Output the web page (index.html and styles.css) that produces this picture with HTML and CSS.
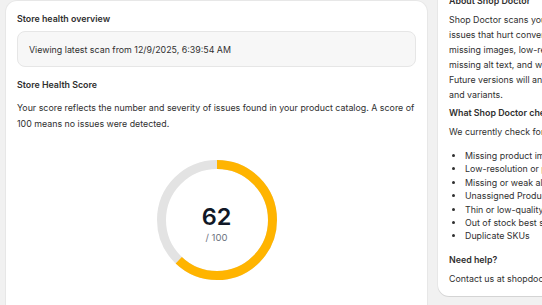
FILE: index.html
```html
<!DOCTYPE html>
<html lang="en">
<head>
    <meta charset="UTF-8">
    <meta name="viewport" content="width=device-width, initial-scale=1.0">
    <title>Shop Doctor</title>
    <link rel="stylesheet" href="styles.css">
</head>
<body>
    <div class="page">
        <!-- Main column -->
        <div class="card main-card">
            <h2 class="card-title">Store health overview</h2>
            <div class="scan-banner">Viewing latest scan from 12/9/2025, 6:39:54 AM</div>

            <h3 class="section-title">Store Health Score</h3>
            <p class="score-text">Your score reflects the number and severity of issues found in your product catalog. A score of 100 means no issues were detected.</p>

            <div class="score-ring">
                <svg width="120" height="120" viewBox="0 0 120 120">
                    <circle cx="60" cy="60" r="55.5" fill="none" stroke="#e3e3e3" stroke-width="9"/>
                    <!-- 62% of circumference 348.7 -->
                    <circle cx="60" cy="60" r="55.5" fill="none" stroke="#ffb400" stroke-width="9"
                            stroke-dasharray="216.2 348.7" transform="rotate(-90 60 60)"/>
                </svg>
                <div class="score-value">
                    <span class="score-number">62</span>
                    <span class="score-max">/ 100</span>
                </div>
            </div>
        </div>

        <!-- Sidebar -->
        <div class="card side-card">
            <h3 class="side-title">About Shop Doctor</h3>
            <p class="side-text about-text">Shop Doctor scans your store for common catalog<br>
                issues that hurt conversions and SEO, such as<br>
                missing images, low-resolution product photos,<br>
                missing alt text, and weak product descriptions.<br>
                Future versions will analyze more data like collections<br>
                and variants.</p>

            <h3 class="side-title">What Shop Doctor checks</h3>
            <p class="side-text">We currently check for:</p>
            <ul class="check-list">
                <li>Missing product images</li>
                <li>Low-resolution or poorly sized images</li>
                <li>Missing or weak alt text</li>
                <li>Unassigned Product Types</li>
                <li>Thin or low-quality descriptions</li>
                <li>Out of stock best sellers</li>
                <li>Duplicate SKUs</li>
            </ul>

            <h3 class="side-title">Need help?</h3>
            <p class="side-text">Contact us at shopdoctor.support@gmail.com</p>
        </div>
    </div>
</body>
</html>
```
FILE: styles.css
```css
body {
    font-family: Inter, "Noto Sans", sans-serif;
    background-color: #f1f1f1;
    color: #303030;
    margin: 0;
    overflow: hidden;
    font-size: 8.85px;
}

.page {
    display: grid;
    grid-template-columns: 421px 240px;
    gap: 11px;
    align-items: start;
    padding: 1px 0 0 6px;
}

.card {
    background-color: #ffffff;
    border-radius: 11px;
    padding: 11px;
    box-shadow: 0 1px 0 rgba(0, 0, 0, 0.08), 0 0 0 1px rgba(0, 0, 0, 0.04);
}

.main-card {
    min-height: 400px;
}

.card-title,
.section-title,
.side-title {
    font-size: 8.85px;
    font-weight: 600;
    line-height: 14px;
    margin: 0;
}

.scan-banner {
    margin-top: 5px;
    height: 34px;
    padding: 0 11px;
    display: flex;
    align-items: center;
    background-color: #f7f7f7;
    border: 1px solid #e6e6e6;
    border-radius: 8px;
}

.section-title {
    margin-top: 11px;
}

.score-text {
    margin: 8px 0 0;
    line-height: 16px;
}

.score-ring {
    position: relative;
    width: 120px;
    height: 120px;
    margin: 28px auto 0;
}

.score-ring svg {
    display: block;
}

.score-value {
    position: absolute;
    inset: 0;
    display: flex;
    flex-direction: column;
    align-items: center;
    justify-content: center;
    padding-top: 8px;
    gap: 2px;
}

.score-number {
    font-size: 23.5px;
    font-weight: 600;
    color: #111827;
    line-height: 26px;
}

.score-max {
    font-size: 9.5px;
    color: #6b7280;
    line-height: 12px;
}

.side-card {
    margin-top: -18px;
    padding-bottom: 9px;
    white-space: nowrap;
    overflow: hidden;
}

.side-text {
    margin: 4px 0 9px;
    line-height: 16px;
}

.side-text.about-text {
    margin-bottom: 4px;
    line-height: 15px;
}

.check-list {
    margin: 0 0 10px;
    padding-left: 16px;
    line-height: 13.4px;
}

.side-card .side-text:last-child {
    margin-bottom: 0;
}
```
